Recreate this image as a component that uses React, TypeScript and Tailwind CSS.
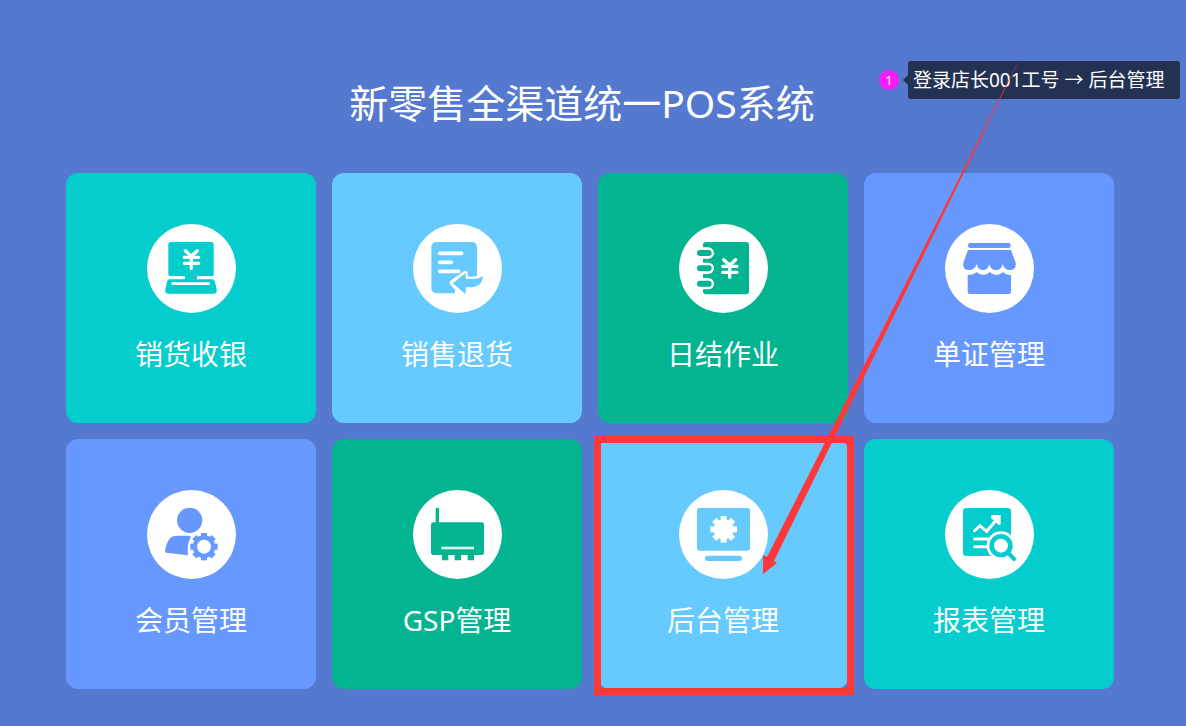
import type { ReactNode } from "react";

interface Tile {
    label: string;
    color: string;
    icon: ReactNode;
    highlighted?: boolean;
}

const gearTeeth = [0, 45, 90, 135, 180, 225, 270, 315];

function YenSign({ x, y }: { x: number; y: number }) {
    return (
        <g transform={`translate(${x} ${y})`} stroke="white" strokeWidth="10" strokeLinecap="round" fill="none">
            <path d="M-18 -21L0 -4L18 -21M0 -4V32M-21 -1H22M-21 17H22" />
        </g>
    );
}

const cashierIcon = (
    <>
        <rect x="97" y="84" width="136" height="103" rx="8" />
        <path d="M146 184H183V198H146ZM101 196H228Q235 196 237 203L242 226Q244 239 234 239H96Q86 239 88 226L93 203Q95 196 101 196Z" />
        <path d="M97 191H143M187 191H233M110 209H218" stroke="white" strokeWidth="8" strokeLinecap="round" />
        <YenSign x={166} y={131} />
    </>
);

const returnIcon = (
    <>
        <rect x="88" y="84" width="137" height="154" rx="15" />
        <path d="M113 118H179M113 145H148M113 172H170" stroke="white" strokeWidth="11" strokeLinecap="round" />
        <path
            d="M225 186Q210 190 197 187V178Q196 167 186 172L147 199Q140 205 145 212L160 228L157 240H228V224Z"
            fill="white"
        />
        <path d="M191 177V194H206Q227 197 243 187Q240 219 210 220H191V241L152 208Z" />
    </>
);

const ledgerIcon = (
    <>
        <rect x="105" y="84" width="138" height="157" rx="9" />
        {[117, 163, 209].map((cy) => (
            <g key={cy}>
                <path d={`M105 ${cy - 17}H121A17 17 0 0 1 121 ${cy + 17}H105Z`} fill="white" />
                <rect x="87" y={cy - 9} width="44" height="18" rx="9" />
            </g>
        ))}
        <YenSign x={185} y={158} />
    </>
);

const shopIcon = (
    <>
        <rect x="102" y="87" width="128" height="15" rx="7" />
        <path d="M102 108H231L245 146Q248 168 227 168Q211 168 206 150Q202 168 186 168Q170 168 166 150Q162 168 147 168Q132 168 128 150Q122 168 106 168Q84 168 88 146Z" />
        <path d="M101 183Q119 183 128 174Q137 183 148 183Q158 183 167 174Q176 183 187 183Q198 183 207 174Q216 183 231 183V233Q231 240 224 240H108Q101 240 101 233Z" />
    </>
);

const memberIcon = (
    <>
        <circle cx="161" cy="121" r="38" />
        <path d="M87 212Q91 185 106 171Q112 167 125 167H156Q165 167 165 172Q152 190 156 226L96 219Q87 219 87 212Z" />
        <circle cx="204" cy="200" r="34" />
        {gearTeeth.map((angle) => (
            <rect key={angle} x="195" y="159" width="18" height="16" transform={`rotate(${angle} 204 200)`} />
        ))}
        <circle cx="204" cy="200" r="21" fill="white" />
    </>
);

const routerIcon = (
    <>
        <rect x="101" y="84" width="10" height="50" />
        <rect x="87" y="127" width="159" height="98" rx="7" />
        <path d="M120 223H139V241H120ZM158 223H177V241H158ZM197 223H216V241H197Z" />
        <rect x="118" y="200" width="98" height="8" fill="white" opacity="0.85" />
    </>
);

const backOfficeIcon = (
    <>
        <rect x="87" y="84" width="159" height="128" rx="7" />
        <rect x="111" y="227" width="111" height="16" rx="8" />
        <g fill="white">
            <circle cx="167" cy="148" r="30" />
            {gearTeeth.map((angle) => (
                <rect key={angle} x="158" y="108" width="18" height="20" transform={`rotate(${angle} 167 148)`} />
            ))}
        </g>
    </>
);

const reportIcon = (
    <>
        <rect x="87" y="84" width="144" height="144" rx="9" />
        <g stroke="white" strokeWidth="9" fill="none" strokeLinecap="round">
            <path d="M122 152L138 137L158 154L190 116" />
            <path d="M122 177H165M122 200H162" />
        </g>
        <path d="M174 105H200V133Q195 137 191 132L171 114Q168 108 174 105Z" fill="white" />
        <circle cx="201" cy="197" r="43" fill="white" />
        <path d="M225 221L241 238" stroke="white" strokeWidth="18" />
        <circle cx="201" cy="197" r="35" />
        <circle cx="201" cy="197" r="21" fill="white" />
        <path d="M222 218L240 237" stroke="currentColor" strokeWidth="12" strokeLinecap="round" />
    </>
);

const tiles: Tile[] = [
    { label: "销货收银", color: "bg-[#05cdcd] text-[#05cdcd]", icon: cashierIcon },
    { label: "销售退货", color: "bg-[#66caff] text-[#66caff]", icon: returnIcon },
    { label: "日结作业", color: "bg-[#02b48f] text-[#02b48f]", icon: ledgerIcon },
    { label: "单证管理", color: "bg-[#6798ff] text-[#6798ff]", icon: shopIcon },
    { label: "会员管理", color: "bg-[#6798ff] text-[#6798ff]", icon: memberIcon },
    { label: "GSP管理", color: "bg-[#02b48f] text-[#02b48f]", icon: routerIcon },
    { label: "后台管理", color: "bg-[#66caff] text-[#66caff]", icon: backOfficeIcon, highlighted: true },
    { label: "报表管理", color: "bg-[#05cdcd] text-[#05cdcd]", icon: reportIcon },
];

function TileButton({ label, color, icon, highlighted }: Tile) {
    return (
        <button
            type="button"
            className={`relative flex aspect-square flex-col items-center justify-center rounded-xl pt-px ${color}`}
        >
            <svg viewBox="30 30 270 270" className="size-[90px]" fill="currentColor" aria-hidden="true">
                <circle cx="166.5" cy="163.5" r="133.5" fill="white" />
                {icon}
            </svg>
            <span className="mt-5 text-[28px] leading-[40px] text-white">{label}</span>
            {highlighted && (
                <span className="absolute -top-[3px] -right-[6px] -bottom-[6px] -left-[4px] border-[7px] border-[#fd3838]" />
            )}
        </button>
    );
}

function StepNote() {
    return (
        <aside className="absolute top-[61px] right-[6px] flex items-center text-white">
            <span className="flex size-5 items-center justify-center rounded-full bg-[#f81cf8] text-[13px] leading-5">1</span>
            <svg viewBox="0 0 5 10" className="ml-1 h-[10px] w-[5px]" aria-hidden="true">
                <path d="M5 0V10L0 5Z" fill="#233253" />
            </svg>
            <p className="min-w-[272px] rounded-[3px] bg-[#233253] pr-3 pl-[5px] text-[19px] leading-[38px] whitespace-nowrap">
                登录店长001工号 → 后台管理
            </p>
        </aside>
    );
}

export default function App() {
    return (
        <div className="relative min-h-screen bg-[#5679d0] pt-[73px] pr-[72px] pb-9 pl-[66px] font-['Noto_Sans','Noto_Sans_CJK_SC',sans-serif]">
            <h1 className="pr-4 text-center text-[39px] leading-[60px] text-white">新零售全渠道统一POS系统</h1>
            <main className="mt-10 grid grid-cols-4 gap-4">
                {tiles.map((tile) => (
                    <TileButton key={tile.label} {...tile} />
                ))}
            </main>
            <StepNote />
            {/* arrow from the note down to the back-office tile */}
            <svg
                viewBox="0 0 264 526"
                className="pointer-events-none absolute top-[50px] right-[160px] h-[526px] w-[264px]"
                aria-hidden="true"
            >
                <path d="M262 0L12 511L15 513L1 524V505L5 507Z" fill="#fd3838" />
            </svg>
        </div>
    );
}
